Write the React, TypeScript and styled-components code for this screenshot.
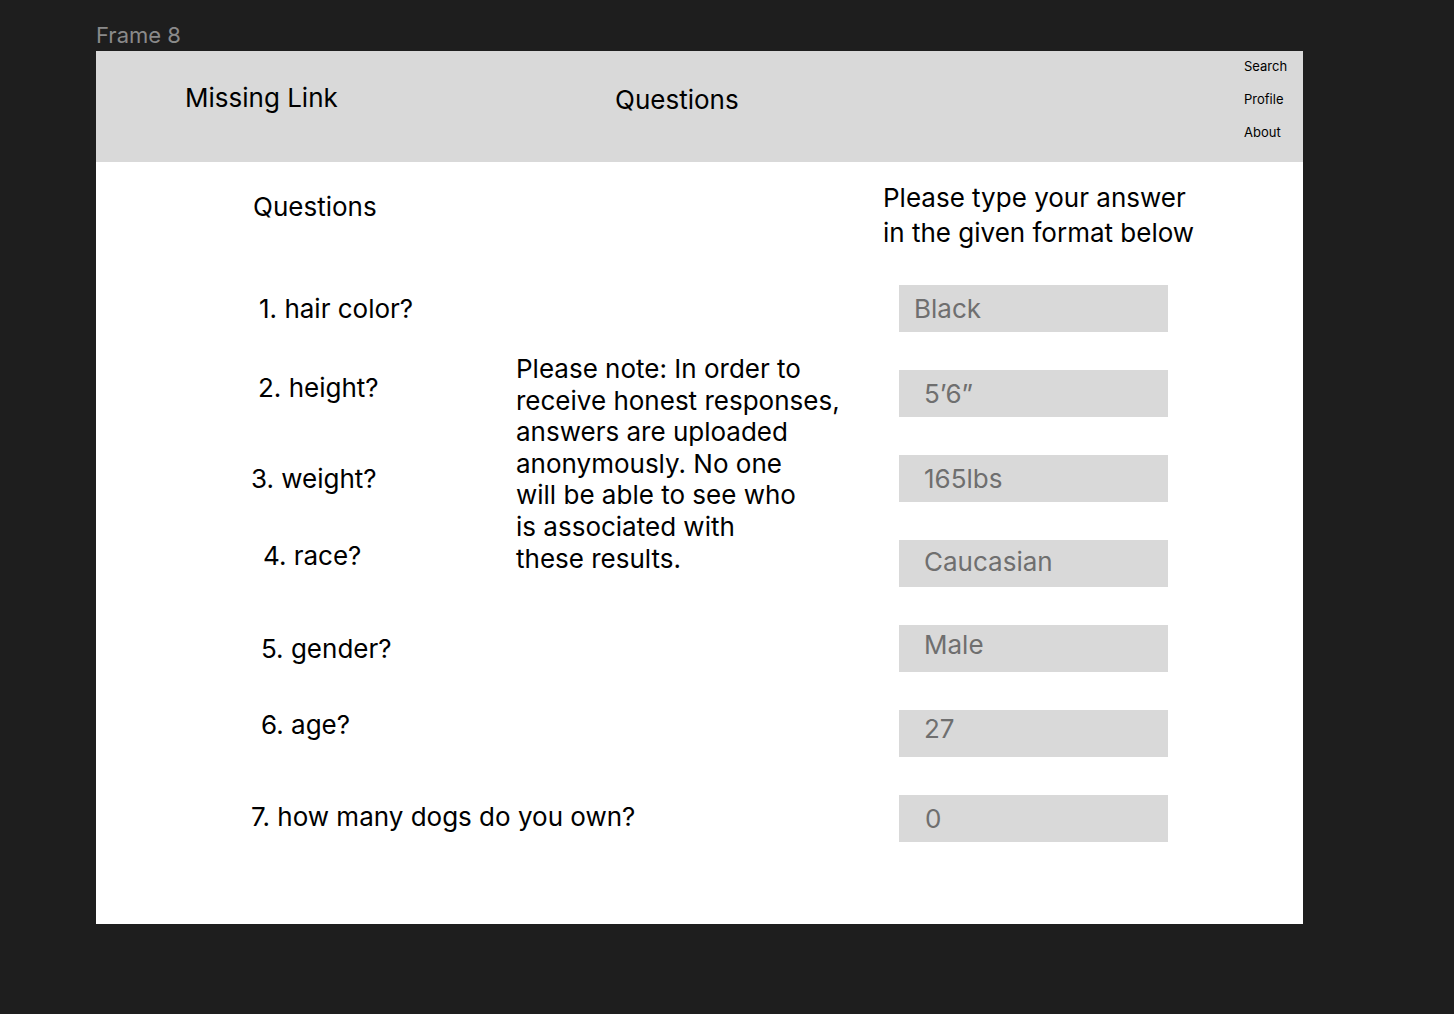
import React from "react";
import styled, { createGlobalStyle } from "styled-components";

const GlobalStyle = createGlobalStyle`
  html, body {
    margin: 0;
    padding: 0;
    background: #1e1e1e;
    font-family: "Inter", "Noto Sans", sans-serif;
  }
`;

interface Question {
  label: string;
  answer: string;
  indent: number;
  nudge: number;
  answerIndent: number;
  answerNudge: number;
}

// nudges keep the loose, hand-placed look of the mockup
const questions: Question[] = [
  { label: "1. hair color?", answer: "Black", indent: 8, nudge: 0, answerIndent: 15, answerNudge: 0 },
  { label: "2. height?", answer: "5’6”", indent: 7, nudge: -6, answerIndent: 25, answerNudge: 0 },
  { label: "3. weight?", answer: "165lbs", indent: 0, nudge: 0, answerIndent: 25, answerNudge: 0 },
  { label: "4. race?", answer: "Caucasian", indent: 12, nudge: -8, answerIndent: 25, answerNudge: -2 },
  { label: "5. gender?", answer: "Male", indent: 10, nudge: 0, answerIndent: 25, answerNudge: -4 },
  { label: "6. age?", answer: "27", indent: 10, nudge: -9, answerIndent: 25, answerNudge: -5 },
  { label: "7. how many dogs do you own?", answer: "0", indent: 0, nudge: -2, answerIndent: 26, answerNudge: 0 },
];

const App: React.FC = () => {
  return (
    <>
      <GlobalStyle />
      <Canvas>
        <FrameLabel>Frame 8</FrameLabel>
        <Frame>
          <Header>
            <Brand>Missing Link</Brand>
            <Title>Questions</Title>
            <Nav>
              <NavItem>Search</NavItem>
              <NavItem>Profile</NavItem>
              <NavItem>About</NavItem>
            </Nav>
          </Header>
          <Body>
            <Heading>Questions</Heading>
            <Instructions>
              Please type your answer
              <br />
              in the given format below
            </Instructions>
            {questions.map((q, i) => (
              <React.Fragment key={q.label}>
                <QuestionLabel row={i + 2} indent={q.indent} nudge={q.nudge}>
                  {q.label}
                </QuestionLabel>
                <AnswerBox row={i + 2} indent={q.answerIndent} nudge={q.answerNudge}>
                  {q.answer}
                </AnswerBox>
              </React.Fragment>
            ))}
            <Note>
              Please note: In order to
              <br />
              receive honest responses,
              <br />
              answers are uploaded
              <br />
              anonymously. No one
              <br />
              will be able to see who
              <br />
              is associated with
              <br />
              these results.
            </Note>
          </Body>
        </Frame>
      </Canvas>
    </>
  );
};

const Canvas = styled.div`
  width: 1454px;
  height: 1014px;
  box-sizing: border-box;
  padding: 22px 0 0 96px;
`;

const FrameLabel = styled.div`
  height: 29px;
  line-height: 26px;
  font-size: 22px;
  color: #8a8a8a;
`;

const Frame = styled.div`
  width: 1207px;
  height: 873px;
  background: #ffffff;
`;

const Header = styled.header`
  display: flex;
  height: 111px;
  background: #d9d9d9;
  box-sizing: border-box;
  padding-left: 89px;
`;

const Brand = styled.div`
  width: 430px;
  padding-top: 31px;
  font-size: 26px;
  line-height: 32px;
  color: #000;
`;

const Title = styled.div`
  padding-top: 33px;
  font-size: 26px;
  line-height: 32px;
  color: #000;
`;

const Nav = styled.nav`
  display: flex;
  flex-direction: column;
  gap: 17px;
  margin-left: auto;
  width: 59px;
  padding-top: 7px;
`;

const NavItem = styled.div`
  font-size: 13px;
  line-height: 16px;
  color: #000;
`;

const Body = styled.main`
  display: grid;
  grid-template-columns: 265px 367px 381px;
  grid-template-rows: 123px repeat(7, 85px);
  padding-left: 155px;
`;

const Heading = styled.div`
  grid-column: 1;
  grid-row: 1;
  padding: 29px 0 0 2px;
  font-size: 26px;
  line-height: 32px;
  color: #000;
`;

const Instructions = styled.div`
  grid-column: 3;
  grid-row: 1;
  padding-top: 18px;
  font-size: 26px;
  line-height: 35px;
  color: #000;
`;

const QuestionLabel = styled.div<{ row: number; indent: number; nudge: number }>`
  grid-column: 1;
  grid-row: ${(p) => p.row};
  display: flex;
  align-items: center;
  height: 47px;
  padding-left: ${(p) => p.indent}px;
  margin-top: ${(p) => p.nudge}px;
  font-size: 26px;
  white-space: nowrap;
  color: #000;
`;

const AnswerBox = styled.div<{ row: number; indent: number; nudge: number }>`
  grid-column: 3;
  grid-row: ${(p) => p.row};
  display: flex;
  align-items: center;
  align-self: start;
  width: 269px;
  height: 47px;
  margin-left: 16px;
  box-sizing: border-box;
  padding: ${(p) => Math.max(p.nudge, 0) * 2}px 0 ${(p) => Math.max(-p.nudge, 0) * 2}px ${(p) => p.indent}px;
  background: #d9d9d9;
  font-size: 26px;
  color: #6f6f6f;
`;

const Note = styled.div`
  grid-column: 2;
  grid-row: 3 / 6;
  margin-top: -17px;
  font-size: 26px;
  line-height: 31.6px;
  color: #000;
`;

export default App;
